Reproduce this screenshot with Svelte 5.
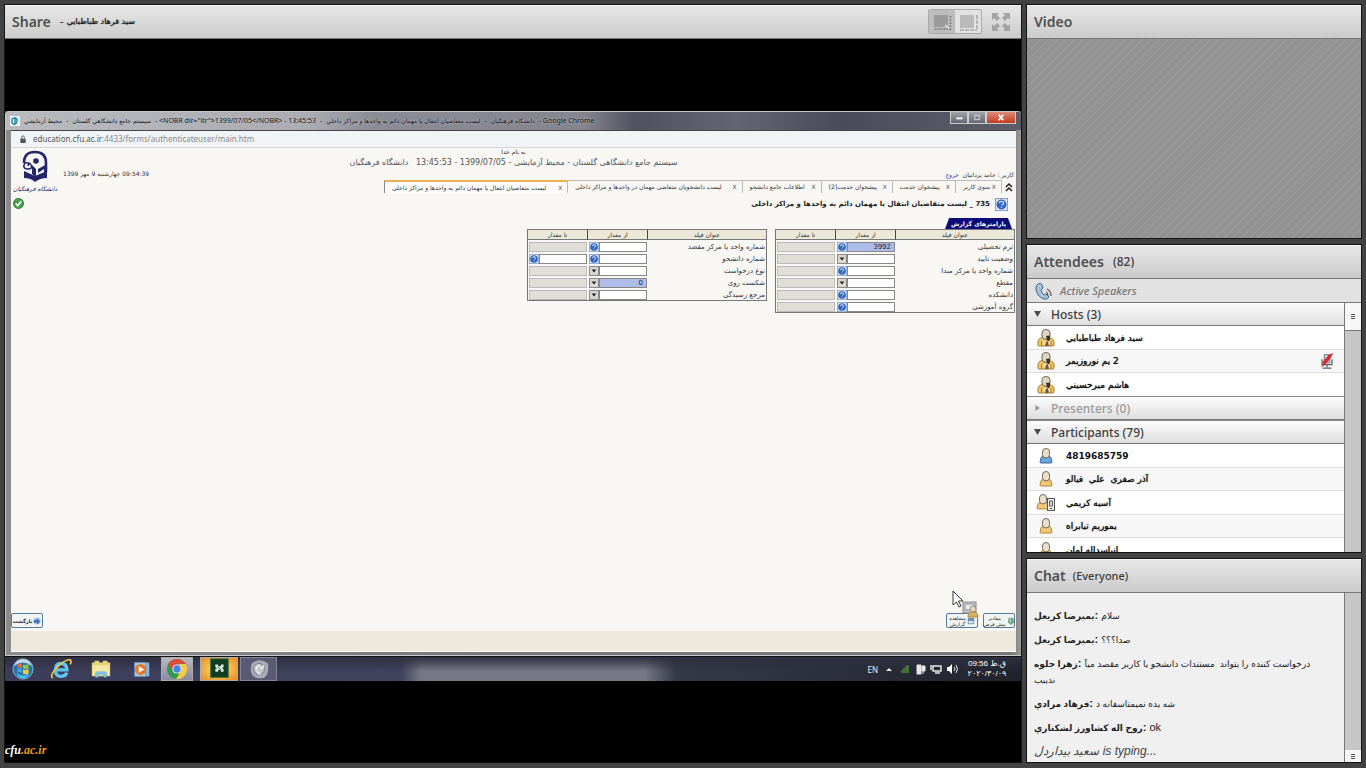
<script>
  const hosts = [
    { name: 'سيد فرهاد طباطبايي' },
    { name: '2 یم نوروزیمر', muted: true },
    { name: 'هاشم ميرحسيني' }
  ];
  const participants = [
    { name: '4819685759', kind: 'blue' },
    { name: 'آذر صفري \u00a0علي \u00a0قيالو', kind: 'gold' },
    { name: 'آسيه کريمي', kind: 'mobile' },
    { name: 'یموریم تیابراه', kind: 'gold' },
    { name: 'انیاسداله امان', kind: 'gold' }
  ];
  const chat = [
    { from: 'یمیرضا کریعل', text: 'سلام' },
    { from: 'یمیرضا کریعل', text: 'صدا؟؟؟' },
    { from: 'زهرا جلوه', text: 'درخواست کننده را یتواند \u00a0مستندات دانشجو یا کاربر مقصد میآ', more: 'ندیبب' },
    { from: 'فرهاد مرادي', text: 'شه یده نمیمتاسفانه د' },
    { from: 'روح اله کشاورز لشکناري', text: 'ok', latin: true }
  ];
  const tabs = [
    'لیست متقاضیان انتقال یا مهمان دائم به واحدها و مراکز داخلی',
    'لیست دانشجویان متقاضی مهمان در واحدها و مراکز داخلی',
    'اطلاعات جامع دانشجو',
    'پیشخوان خدمت[2]',
    'پیشخوان خدمت',
    'منوی کاربر'
  ];
  const forms = [
    {
      id: 'a',
      rows: [
        { label: 'شماره واحد یا مرکز مقصد', from: 'find' },
        { label: 'شماره دانشجو', from: 'find', to: true },
        { label: 'نوع درخواست', from: 'drop' },
        { label: 'شکست روی', from: 'drop', value: '0', on: true },
        { label: 'مرجع رسیدگی', from: 'drop' }
      ]
    },
    {
      id: 'b',
      rows: [
        { label: 'ترم تحصیلی', from: 'find', value: '3992', on: true },
        { label: 'وضعیت تایید', from: 'drop' },
        { label: 'شماره واحد یا مرکز مبدا', from: 'find' },
        { label: 'مقطع', from: 'drop' },
        { label: 'دانشکده', from: 'find' },
        { label: 'گروه آموزشی', from: 'find' }
      ]
    }
  ];
</script>

{#snippet help()}
  <svg class="fill" viewBox="0 0 10 10" aria-hidden="true">
    <rect width="10" height="10" fill="#dbe6f6" stroke="#5a7db8" />
    <circle cx="5" cy="5" r="3.8" fill="#2f63bd" />
    <path d="M3.4 4q0-1.4 1.6-1.4T6.600 4Q6.600 4.900 5 5.500M5 6.500v1" stroke="#cfe2ff" stroke-width="1" fill="none" />
  </svg>
{/snippet}

{#snippet person(kind)}
  <svg class="person" viewBox="0 0 20 20" aria-hidden="true">
    {#if kind === 'host'}
      <path d="M2 17v-4q1-3 4-3.500h7q4 .5 5 3.500v4q0 1-1 1H3q-1 0-1-1z" fill="#f2c869" stroke="#a47c33" />
      <path d="M6 5q0-3.500 4-3.500t4 3.500v3q0 3.500-4 3.500T6 8z" fill="#e0d6c4" stroke="#6e6658" />
      <path d="M5.500 13v5M15 13v5" stroke="#a47c33" />
      <path d="M10 8q3-1 4 0v3l-1 3-2-2z" fill="#3b3128" />
      <path d="M8 12.500l3 2 3-2-1 5.500H9z" fill="#fff1c4" />
      <path d="M10 13.500h2l1 4.500H9z" fill="#6a5638" />
    {:else}
      <g transform={kind === 'mobile' ? 'translate(-3 -1)' : ''}>
        <path d="M4 16l1-4q.4-1.500 2-1.500h6q1.600 0 2 1.500l1 4q0 1-1 1H5q-1 0-1-1z" fill={kind === 'blue' ? '#6ba3dc' : '#f1c878'} stroke={kind === 'blue' ? '#356ba6' : '#b58538'} />
        <path d="M6.500 6q0-3.500 3.500-3.500T13.500 6v2.500q0 3.500-3.500 3.500T6.500 8.500z" fill="#eadfcb" stroke="#74695a" />
      </g>
      {#if kind === 'mobile'}
        <rect x="11.500" y="5.500" width="7" height="12" fill="#eee" stroke="#555" />
        <rect x="13.500" y="8" width="3" height="5" fill="#c8d4df" stroke="#666" />
        <path d="M14 15.500h2" stroke="#444" />
      {/if}
    {/if}
  </svg>
{/snippet}

{#snippet attendee(p, kind)}
  <li>
    {@render person(kind)}
    <bdi class:digits={kind === 'blue'} dir={p.muted || kind !== 'host' ? 'rtl' : 'auto'}>{p.name}</bdi>
    {#if p.muted}
      <svg class="mic" viewBox="0 0 16 20" aria-label="muted">
        <path d="M5 3h6v9H5z" fill="#d7dde3" stroke="#536577" />
        <path d="M2.500 8v6h11V8M8 14v3M3 18h10" fill="none" stroke="#536577" stroke-width="1.400" />
        <path d="M1.500 17L4 10l6-7 5-2-3 6-6 7z" fill="#d52b2b" />
      </svg>
    {/if}
  </li>
{/snippet}

<div class="room">
  <section class="panel share">
    <header>
      <h1>Share</h1>
      <span class="dash">-</span>
      <bdi class="sharer">سيد فرهاد طباطبايي</bdi>
      <div class="tools">
        <div class="switch">
          <button class="on" aria-label="Docked layout">
            <svg viewBox="0 0 24 20"><path d="M4 3h14v9l-4 3H4z" fill="#9b9b9b" /><path d="M20.500 4v13H4" fill="none" stroke="#8b8b8b" stroke-width="2" stroke-dasharray="2 1" /><path d="M15 13l4 4" stroke="#eee" /></svg>
          </button>
          <button aria-label="Side layout">
            <svg viewBox="0 0 24 20"><rect x="4" y="3" width="14" height="13" fill="#b9b9b9" /><path d="M21 3v14M4 18h17" fill="none" stroke="#a5a5a5" stroke-width="1.500" stroke-dasharray="4 1" /></svg>
          </button>
        </div>
        <button class="full" aria-label="Full screen">
          <svg viewBox="0 0 18 18" fill="#a3a3a3"><path d="M0 0h7L5 2l3 3-3 3-3-3-2 2zM18 0v7l-2-2-3 3-3-3 3-3-2-2zM0 18v-7l2 2 3-3 3 3-3 3 2 2zM18 18h-7l2-2-3-3 3-3 3 3 2-2z" /></svg>
        </button>
      </div>
    </header>

    <div class="stage">
      <div class="desktop">
        <div class="window">
          <div class="titlebar">
            <svg class="fav" viewBox="0 0 10 10" aria-hidden="true"><rect width="10" height="10" fill="#eef5f7" /><path d="M2 3q3-2 5 0v3Q5 10 2 7zM5 1v7" fill="none" stroke="#278ba3" stroke-width="1.500" /></svg>
            <div class="caption">
              <bdi>محيط آزمايشي</bdi><span>-</span><bdi>سيستم جامع دانشگاهي گلستان</bdi><span>- &lt;NOBR dir="ltr"&gt;1399/07/05&lt;/NOBR&gt; - 13:45:53</span><span>-</span><bdi>ليست متقاضيان انتقال يا مهمان دائم به واحدها و مراکز داخلي</bdi><span>-</span><bdi>دانشگاه فرهنگيان</bdi><span>- Google Chrome</span>
            </div>
            <div class="winbtns">
              <button aria-label="Minimize"><svg viewBox="0 0 18 12"><rect x="6" y="6" width="7" height="2" fill="#fff" /></svg></button>
              <button aria-label="Restore"><svg viewBox="0 0 18 12"><rect x="6.500" y="3.500" width="5" height="5" fill="none" stroke="#ddd" /></svg></button>
              <button class="close" aria-label="Close"><svg viewBox="0 0 18 12"><path d="M6.500 3l5 6M11.500 3l-5 6" stroke="#fff" stroke-width="2" /></svg></button>
            </div>
          </div>
          <div class="address">
            <svg viewBox="0 0 8 9" aria-hidden="true"><rect x="1" y="4" width="6" height="5" fill="#555" /><path d="M2.500 4V2.500q0-1.500 1.500-1.500t1.500 1.500V4" fill="none" stroke="#555" /></svg>
            <span><b>education.cfu.ac.ir</b>:4433/forms/authenticateuser/main.htm</span>
          </div>
          <div class="page">
            <aside>
              <div class="brand">
                <div class="logo">
                  <svg viewBox="0 0 26 32" aria-hidden="true" fill="none" stroke="#22266a">
                    <path d="M2 13Q2 2 13 2t11 11v9" stroke-width="2.600" />
                    <circle cx="14" cy="11" r="2.800" fill="#22266a" stroke="none" />
                    <path d="M8 14q-5-3-6 1t4 4 3-4-3 1" stroke-width="1.600" />
                    <path d="M2 21l11 5 12-5v7q-7 0-12 4-4-4-11-4z" fill="#22266a" stroke="none" />
                    <path d="M10 15l4 4v8l-4-3zM25 14v11l-3 1v-7l-6 4v-4z" fill="#22266a" stroke="none" />
                  </svg>
                  <span>دانشگاه فرهنگیان</span>
                </div>
                <p><bdi dir="ltr">1399</bdi> <bdi>چهارشنبه 9 مهر</bdi> <bdi dir="ltr">09:54:39</bdi></p>
              </div>
              <svg class="ok" viewBox="0 0 12 12" aria-hidden="true"><circle cx="6" cy="6" r="5.500" fill="#48a049" stroke="#27752c" /><path d="M3 6l2.200 2.500L9 3.500" stroke="#fff" stroke-width="1.800" fill="none" /></svg>
            </aside>
            <main>
              <p class="bless">به نام خدا</p>
              <p class="system">سیستم جامع دانشگاهی گلستان - محیط آزمایشی - <bdi dir="ltr">13:45:53 - 1399/07/05</bdi> &nbsp; دانشگاه فرهنگیان</p>
              <p class="user">کاربر : حامد یزدانیان &nbsp;<a href="#exit">خروج</a></p>
              <nav>
                {#each tabs as t, i}
                  <a href="#tab{i}" class:active={i === 0}><i>X</i><span>{t}</span></a>
                {/each}
                <svg class="up" viewBox="0 0 8 10" aria-hidden="true"><path d="M1 5l3-3 3 3M1 9l3-3 3 3" fill="none" stroke="#222" stroke-width="1.500" /></svg>
              </nav>
              <div class="heading">
                <button aria-label="راهنما">{@render help()}</button>
                <h2>735 _ لیست متقاضیان انتقال یا مهمان دائم به واحدها و مراکز داخلی</h2>
              </div>
              <div class="legend"><span>پارامترهای گزارش</span></div>
              <div class="forms">
                {#each forms as f}
                  <table>
                    <thead><tr><th>تا مقدار</th><th>از مقدار</th><th>عنوان فیلد</th></tr></thead>
                    <tbody>
                      {#each f.rows as r, i}
                        <tr>
                          <td>
                            <div class="cell">
                              {#if r.to}<button aria-label="جستجو">{@render help()}</button><input aria-label="تا مقدار" />
                              {:else}<input aria-label="تا مقدار" disabled />{/if}
                            </div>
                          </td>
                          <td>
                            <div class="cell">
                              {#if r.from === 'find'}<button aria-label="جستجو">{@render help()}</button>
                              {:else}<button class="drop" aria-label="انتخاب"><svg class="fill" viewBox="0 0 10 10"><path d="M2 3h6L5 7z" fill="#222" /></svg></button>{/if}
                              <input id="{f.id}{i}" class:on={r.on} value={r.value ?? ''} />
                            </div>
                          </td>
                          <td><label for="{f.id}{i}">{r.label}</label></td>
                        </tr>
                      {/each}
                    </tbody>
                  </table>
                {/each}
              </div>
            </main>
            <div class="actions">
              <button class="act">بازگشت<svg viewBox="0 0 10 10"><circle cx="5" cy="5" r="4.500" fill="#9dbfe6" /><path d="M1 4h4V2l4 3.500L5 9V7H1z" fill="#366fb2" /></svg></button>
              <span class="spring"></span>
              <button class="act two"><span>مشاهده<br />گزارش</span><svg viewBox="0 0 10 10"><rect x="1" y="1" width="8" height="8" fill="#6993b6" /><path d="M2 5h6v3H2z" fill="#d7e6ed" /></svg></button>
              <button class="act two"><span>مقادیر<br />پیش فرض</span><svg viewBox="0 0 10 10"><path d="M2 1h6l1 6-4 3-4-3z" fill="#74a583" /><path d="M4 2v5" stroke="#def0df" /></svg></button>
              <svg class="pointer" viewBox="0 0 28 30" aria-hidden="true">
                <path d="M2 1v14l3.500-3 2.500 5 2-1-2.500-5H12z" fill="#fff" stroke="#333" />
                <rect x="12" y="12" width="13" height="11" fill="#c9cbc8" stroke="#888" /><rect x="14" y="14" width="9" height="6" fill="#e6ebed" stroke="#8995a0" />
                <circle cx="22" cy="19" r="3" fill="#e6d9c5" stroke="#a6896c" /><path d="M17 27q0-5 5-5t5 5z" fill="#dbb266" stroke="#b78b43" />
              </svg>
            </div>
          </div>
          <div class="status"></div>
        </div>
        <footer class="taskbar">
          <button aria-label="Start"><svg viewBox="0 0 24 24"><circle cx="12" cy="12" r="11" fill="#2873ac" stroke="#8cb9d5" /><path d="M2 9q10-8 20 0-3-8-10-8T2 9z" fill="#c2d7e4" /><path d="M5 16q7 6 14 0-2 6-7 6t-7-6z" fill="#43c3e8" /><path d="M6 7q3-2 5 0v4q-3-2-5 0z" fill="#ef6537" /><path d="M12 7q3 1.500 6-.5v5q-3 1.500-6 0z" fill="#8fc743" /><path d="M6 12q3-2 5 0v4q-3-2-5 0z" fill="#4aa4e8" /><path d="M12 12.500q3 1.500 6-.5v5q-3 1.500-6 0z" fill="#fccb39" /></svg></button>
          <button aria-label="Internet Explorer"><svg viewBox="0 0 24 24" fill="none"><path d="M18.500 16q-2 4-6.500 4-6 0-6-7t6-7q6.500 0 6.500 7H8" stroke="#62c4ee" stroke-width="3.600" /><path d="M3 22Q-1 19 8 10T22 2q2 1 0 5" stroke="#efc943" stroke-width="1.800" /></svg></button>
          <button aria-label="Explorer"><svg viewBox="0 0 24 24"><path d="M2 5h3V3h5v2h4V3h5v2h3v15H2z" fill="#e7d37c" /><path d="M3 8h18v11H3z" fill="#f4e7a2" /><path d="M6 21v-4q0-2 2-2h8q2 0 2 2v4h-3v-3H9v3z" fill="#83c4e7" stroke="#5da6ce" stroke-width=".5" /></svg></button>
          <button aria-label="Media Player"><svg viewBox="0 0 24 24"><path d="M9 5h12v15H9z" fill="#8eb5d7" /><path d="M5 5h12v15H5z" fill="#b2cbe0" stroke="#6792ba" /><circle cx="11.500" cy="12.500" r="6" fill="#e37a2b" /><path d="M9.500 9l6 3.500-6 3.500z" fill="#fff" /></svg></button>
          <button class="task lit" aria-label="Chrome"><svg viewBox="0 0 24 24"><circle cx="12" cy="12" r="11" fill="#34994e" /><path d="M2.500 6.500A11 11 0 0 1 21.500 6.500H12L8 14z" fill="#dc4b3c" /><path d="M21.500 6.500A11 11 0 0 1 11 23l5.500-9q1-4-2.500-7.500z" fill="#f6cc43" /><circle cx="12" cy="12" r="5" fill="#fff" /><circle cx="12" cy="12" r="4" fill="#4384e8" /></svg></button>
          <button class="task orange" aria-label="Recorder"><svg viewBox="0 0 24 24"><rect x="3" y="1" width="19" height="20" fill="#103d21" stroke="#2a602f" /><path d="M8 7h3v2h3V7h3v3l-2 1 2 1v3h-3v-2h-3v2H8v-3l2-1-2-1z" fill="#dfeee0" /><path d="M11 10l3 3" stroke="#103d21" /></svg></button>
          <button class="task glass" aria-label="Connect"><svg viewBox="0 0 24 24"><path d="M4 6q8-7 18 0v7q-1 10-9 9Q3 22 3 12z" fill="#aaaab5" /><circle cx="12" cy="12" r="6" fill="#c4c4ca" stroke="#777887" /><path d="M9 13q0-4 4-5m0 3q3 1 4-3m-3 9q-3 1-4-3" stroke="#eee" stroke-width="1.800" fill="none" /></svg></button>
          <span class="spring"></span>
          <span class="lang">EN</span>
          <svg class="tray" viewBox="0 0 80 12" aria-hidden="true"><path d="M3 8l3-3 3 3z" fill="#eee" /><path d="M19 10V7M21 10V5M23 10V3M25 10V2" stroke="#498a32" stroke-width="1.500" /><path d="M34 2h4v9h-4zM39 3h3v5h-3zM40 8v3" fill="#e7e7e7" stroke="#e7e7e7" /><path d="M50 3h8v5h-8zM48 2v5M52 10h5" fill="none" stroke="#e7e7e7" stroke-width="1.500" /><path d="M64 4h2l3-3v10l-3-3h-2z" fill="#fff" /><path d="M71 4q2 2 0 4M73 2q3 4 0 8" fill="none" stroke="#eee" /></svg>
          <span class="clock"><span dir="ltr">09:56 <bdi>ق.ظ</bdi></span><span><bdi dir="ltr">۲۰۲۰/۳۰/۰۹</bdi></span></span>
        </footer>
      </div>
      <a class="mark" href="#cfu"><b>cfu</b>.ac.ir</a>
    </div>
  </section>

  <div class="side">
    <section class="panel video">
      <header><h1>Video</h1></header>
      <div class="feed"></div>
    </section>

    <section class="panel attendees">
      <header><h1>Attendees</h1><span class="sub">(82)</span></header>
      <div class="speakers">
        <svg viewBox="0 0 18 18" aria-hidden="true"><path d="M3 2q3-2 4 1l1 3-2 2q1 4 3 5l2-1 3 3q-2 3-5 2Q1 14 1 6q0-3 2-4z" fill="#a8c4da" stroke="#43617b" /><path d="M11 10q2 1 2 4M12 7q4 2 4 7" fill="none" stroke="#555" stroke-width="1.200" /></svg>
        <em>Active Speakers</em>
      </div>
      <div class="scroller">
        <div class="list">
          <h3><span class="tri"></span>Hosts (3)</h3>
          <ul>{#each hosts as p}{@render attendee(p, 'host')}{/each}</ul>
          <h3 class="off"><span class="tri"></span>Presenters (0)</h3>
          <h3><span class="tri"></span>Participants (79)</h3>
          <ul>{#each participants as p}{@render attendee(p, p.kind)}{/each}</ul>
        </div>
        <div class="track"><div class="thumb"><i></i></div></div>
      </div>
    </section>

    <section class="panel chat">
      <header><h1>Chat</h1><span class="sub small">(Everyone)</span></header>
      <div class="scroller">
        <div class="log">
          {#each chat as m}
            <p><b><bdi>{m.from}</bdi>:</b> <bdi class:latin={m.latin}>{m.text}</bdi>{#if m.more}<br /><bdi>{m.more}</bdi>{/if}</p>
          {/each}
          <p class="typing"><bdi>سعید بيداردل</bdi> is typing...</p>
        </div>
        <div class="track end"><div class="thumb"><i></i></div></div>
      </div>
    </section>
  </div>
</div>

<style>
  :global(body) { margin: 0; background: #424242; }
  .room, .room * { box-sizing: border-box; }
  .room {
    display: grid;
    grid-template-columns: minmax(0, 1018fr) minmax(0, 336fr);
    gap: 4px;
    height: 100vh;
    padding: 4px 4px 5px;
    background: #424242;
    color: #3c3c3c;
    font-family: "Noto Sans", "DejaVu Sans", sans-serif;
  }
  h1, h2, h3, p, ul { margin: 0; padding: 0; }
  button { padding: 0; border: 0; background: none; font: inherit; color: inherit; display: block; }
  svg { display: block; }
  .fill { width: 100%; height: 100%; }
  .spring { flex: 1; }
  .side { display: grid; grid-template-rows: 235fr 309fr 205fr; gap: 5px; min-height: 0; }
  .panel { display: flex; flex-direction: column; min-height: 0; min-width: 0; border: 1px solid #141414; overflow: hidden; }
  .panel > header {
    display: flex; align-items: center; flex: none; height: 34px; padding: 0 7px;
    background: linear-gradient(#e8e8e8, #cbcbcb); border-bottom: 1px solid #777; box-shadow: inset 0 1px #f8f8f8;
  }
  h1 { font-size: 14px; line-height: 20px; font-weight: 600; color: #505050; }
  .dash { margin-left: 9px; font-size: 12px; }
  .sharer { margin-left: 3px; font: 8px "DejaVu Sans", sans-serif; color: #222; text-shadow: 0 0 1px #222; }
  .sub { margin-left: 9px; font-size: 12px; font-weight: 500; }
  .small { margin-left: 7px; font-size: 11px; }

  .tools { display: flex; align-items: center; gap: 10px; margin-left: auto; padding-right: 4px; }
  .switch { display: flex; border: 1px solid #aaa; border-radius: 2px; background: #e2e2e2; }
  .switch button { width: 26px; height: 23px; padding: 1px; }
  .switch .on { background: #bdbdbd; }
  .full svg { width: 18px; height: 18px; }

  .stage { position: relative; flex: 1; display: flex; flex-direction: column; padding-top: 72px; background: #000; }
  .desktop { display: flex; flex-direction: column; height: 570px; background: #3a3b4c; }
  .window {
    flex: 1; display: flex; flex-direction: column; min-height: 0; padding: 0 5px 3px;
    background: linear-gradient(90deg, #8b8b8e, #777 50%, #777 99%, #9a9a9a); border: solid #c8c8c8; border-width: 1px 0 1px 1px; border-radius: 4px 4px 0 0;
  }
  .titlebar {
    display: flex; align-items: center; height: 18px; margin: 0 -5px; padding-left: 4px; border-radius: 3px 3px 0 0;
    background: linear-gradient(90deg, #b9babf, #abacb2 30%, #8a8b95 36%, #84858f 57%, #50515f 62%, #646572 72%, #4a4b5a 82%, #5d5e69);
  }
  .fav { width: 10px; height: 10px; margin-right: 4px; }
  .caption { display: flex; align-items: center; gap: 4px; font: 7px/12px "Noto Sans", "DejaVu Sans", sans-serif; color: #15151c; white-space: pre; text-shadow: 0 0 3px #ccc; }
  .caption bdi { font: 6px/12px "DejaVu Sans", sans-serif; }
  .winbtns { display: flex; align-self: flex-start; margin-left: auto; padding-right: 5px; }
  .winbtns button { width: 18px; height: 12px; border: 1px solid #ccc; border-top: 0; background: linear-gradient(#a3a3aa, #666675); }
  .winbtns .close { width: 30px; background: linear-gradient(#db8d78, #c23c20); }
  .winbtns svg { width: 100%; height: 100%; }
  .address {
    display: flex; align-items: center; gap: 6px; height: 18px; padding: 0 8px;
    background: #f1f4f7; border-top: 1px solid #444; border-bottom: 1px solid #d4d4d4; font: 8px/12px "Noto Sans", sans-serif; color: #888;
  }
  .address svg { width: 8px; height: 8px; }
  .address b { font-weight: 400; color: #555; }

  .page {
    flex: 1; display: grid; grid-template-columns: 134px minmax(0, 1fr); grid-template-rows: 1fr auto; min-height: 0;
    background: #f8f7f3; font: 7px/10px "DejaVu Sans", sans-serif; color: #333;
  }
  aside { padding: 2px 2px 0; }
  .brand { display: flex; align-items: center; gap: 6px; white-space: nowrap; }
  .logo { width: 45px; height: 47px; color: #22266a; text-align: center; }
  .logo svg { width: 26px; height: 32px; margin: 0 auto; }
  .logo span { display: block; font-size: 6px; line-height: 13px; font-style: italic; white-space: nowrap; }
  .brand p { font-size: 6px; }
  .ok { width: 11px; height: 11px; margin-top: 1px; }
  main { text-align: right; direction: rtl; }
  .bless, .system { text-align: center; margin-right: 134px; transform: translateX(0); }
  main .bless, main .system { margin: 0 0 0 0; padding-right: 0; padding-left: 134px; }
  .bless { font-size: 6px; line-height: 8px; }
  .system { font-size: 8px; line-height: 13px; color: #555; }
  main .bless, main .system { padding-left: 0; padding-right: 134px; }
  .user { line-height: 11px; font-size: 6px; padding-right: 2px; }
  .user a { color: #3532a8; text-decoration: none; }
  nav { direction: ltr; display: grid; grid-template-columns: 184fr 174fr 79fr 71fr 63fr 46fr 14fr; width: 632px; height: 13px; font-size: 6px; }
  nav a { direction: rtl; display: flex; align-items: center; justify-content: space-between; padding: 0 5px 0 7px; border: solid #bbb; border-width: 1px 1px 0 0; color: #333; text-decoration: none; white-space: nowrap; }
  nav a i { font-style: normal; color: #555; }
  nav .active { border-left: 1px solid #888; border-top: 2px solid #eab052; background: #fcfbf9; }
  .up { width: 8px; height: 10px; margin: 2px 0 0 3px; }
  .heading { display: flex; align-items: center; gap: 5px; height: 22px; padding: 0 8px 0 0; }
  .heading button { width: 13px; height: 13px; }
  h2 { font-size: 7px; font-weight: 700; color: #222; }
  .legend { display: flex; height: 14px; padding-right: 4px; align-items: flex-end; }
  .legend span { padding: 0 6px; height: 11px; background: #0c0c78; color: #fff; font-size: 6px; font-weight: 700; line-height: 11px; clip-path: polygon(6% 0, 94% 0, 100% 100%, 0 100%); }
  .forms { display: flex; direction: ltr; justify-content: flex-end; align-items: flex-start; gap: 8px; padding-right: 1px; }
  table { width: 240px; table-layout: fixed; border-collapse: separate; border-spacing: 0; border: 1px solid #777; }
  th { height: 10px; padding: 0; text-align: center; font-size: 6px; line-height: 9px; font-weight: 400; background: #ebe8d9; border-bottom: 1px solid #777; border-right: 1px solid #444; }
  th:nth-child(1), th:nth-child(2) { width: 60px; }
  th:last-child { border-right: 0; }
  td { height: 12px; padding: 1px 1px 0; direction: rtl; font-size: 7px; line-height: 10px; white-space: nowrap; }
  label { display: block; }
  .cell { display: flex; direction: ltr; width: 58px; }
  .cell button { width: 10px; height: 10px; flex: none; }
  .cell .drop { border: 1px solid #888; background: #d9d7cf; }
  input { flex: 1; min-width: 0; width: 0; height: 10px; padding: 0 3px; border: 1px solid #888; background: #fff; font: 7px/8px "DejaVu Sans", sans-serif; color: #223; text-align: right; border-radius: 0; }
  input:disabled { background: #dfded7; border-color: #bbb; }
  input.on { background: #aebce9; }
  .actions { position: relative; grid-column: 1 / -1; display: flex; gap: 5px; align-items: flex-end; height: 20px; padding: 0 1px 3px 0; }
  .act { display: flex; align-items: center; justify-content: center; gap: 1px; width: 32px; height: 15px; border: 1px solid #557c9f; border-radius: 2px; background: #f2f5f6; font-size: 5px; font-weight: 700; color: #222; white-space: nowrap; }
  .act svg { width: 8px; height: 10px; flex: none; }
  .two { line-height: 6px; font-weight: 400; }
  .pointer { position: absolute; right: 37px; bottom: 11px; width: 28px; height: 30px; }
  .status { height: 21px; background: #eee9dc; border-bottom: 1px solid #fff; }

  .taskbar {
    display: flex; align-items: center; height: 25px; border-top: 1px solid #111;
    background: linear-gradient(#2e2f40, #2e2f4000 60%), linear-gradient(90deg, #3c3d5b, #41425c 39%, #777887 41%, #777887 63%, #353847 66%, #21242d);
  }
  .taskbar > button { width: 40px; height: 24px; display: flex; align-items: center; justify-content: center; flex: none; }
  .taskbar button svg { width: 22px; height: 22px; }
  .taskbar > button:first-child { width: 36px; }
  .taskbar .task { width: 32px; border: 1px solid #aaa; background: #8d8c9e; }
  .taskbar .lit { margin-right: 7px; background: linear-gradient(#b9b7c0, #8c8a9f); }
  .taskbar .orange { width: 38px; margin-right: 2px; background: radial-gradient(#ffe37b, #e98b22); }
  .taskbar .glass { width: 37px; background: #5b5a75; border-color: #85849a; }
  .lang { font-size: 8px; color: #eee; margin-right: 5px; }
  .tray { width: 80px; height: 12px; }
  .clock { display: flex; flex-direction: column; align-items: center; width: 48px; margin-right: 10px; font: 8px/10px "Liberation Sans", "DejaVu Sans", sans-serif; color: #fff; white-space: nowrap; }
  .mark { position: absolute; left: 0; bottom: 4px; font: italic 700 12px/16px "Liberation Serif", serif; color: #e5982c; text-decoration: none; }
  .mark b { color: #fff; }

  .feed { flex: 1; background: repeating-linear-gradient(135deg, #929292 0 3px, #9d9d9d 4px, #929292 5px 6px); }
  .speakers { display: flex; align-items: center; gap: 7px; flex: none; height: 24px; padding-left: 8px; background: #e2e2e2; border-bottom: 1px solid #777; font-size: 11px; font-weight: 500; color: #777; }
  .speakers svg { width: 18px; height: 18px; }
  .scroller { flex: 1; display: flex; min-height: 0; }
  .list, .log { flex: 1; min-width: 0; overflow: hidden; }
  .list { background: #fff; }
  .track { width: 17px; flex: none; display: flex; flex-direction: column; background: #c6c6c6; border-left: 1px solid #777; }
  .thumb { display: flex; align-items: center; justify-content: center; height: 28px; background: #f6f6f6; border-bottom: 1px solid #777; }
  .thumb i { width: 4px; height: 5px; background: repeating-linear-gradient(#555 0 1px, transparent 1px 2px); }
  .end { justify-content: flex-end; }
  .end .thumb { height: 12px; border: 0; }
  h3 { display: flex; align-items: center; height: 23px; padding-left: 7px; background: linear-gradient(#fcfcfc, #dedede); border-bottom: 1px solid #777; font-size: 12px; font-weight: 500; color: #3c3c3c; }
  h3 + h3, ul + h3 { height: 24px; border-top: 1px solid #888; }
  .tri { width: 7px; height: 6px; margin-right: 10px; background: #4b4b4b; clip-path: polygon(0 0, 100% 0, 50% 100%); }
  .off { color: #999; }
  .off .tri { background: #999; clip-path: polygon(20% 0, 85% 50%, 20% 100%); }
  ul { list-style: none; }
  li { display: flex; align-items: center; height: 24px; padding: 0 9px; border-bottom: 1px solid #ddd; font: 9px "DejaVu Sans", sans-serif; color: #111; white-space: nowrap; }
  li bdi { text-shadow: 0 0 1px #111; }
  li .digits { font-weight: 700; text-shadow: none; }
  li:nth-child(even) { height: 23px; background: #f7f7f7; }
  li:last-child { height: 23px; border-bottom: 0; }
  .person { width: 20px; height: 20px; margin-right: 10px; }
  .mic { width: 16px; height: 18px; margin-left: auto; }

  .log { padding: 14px 7px 0; background: #f0f0f0; font: 11px/16px "Liberation Sans", "DejaVu Sans", sans-serif; color: #222; }
  .log p { margin-bottom: 8px; }
  .log bdi { font-size: 9px; line-height: 10px; }
  .log .latin { font-size: 11px; }
  .log .typing, .log .typing bdi { font-style: italic; color: #444; font-size: 12px; }
</style>
